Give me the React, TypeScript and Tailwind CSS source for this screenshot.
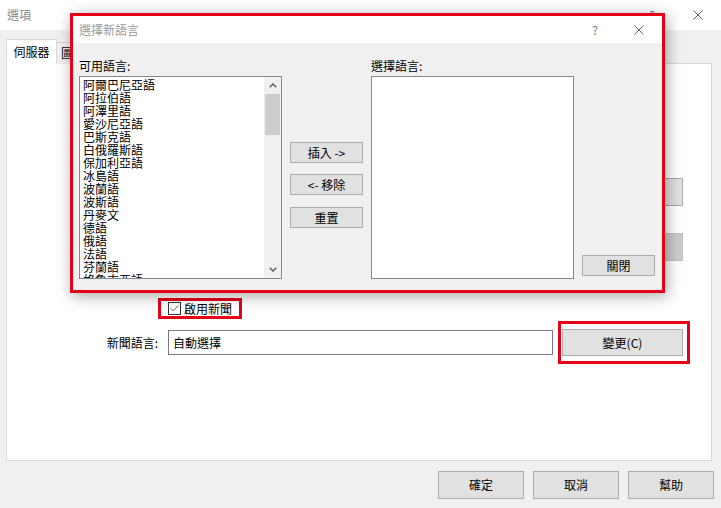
import { Check } from 'lucide-react'

const font = { fontFamily: '"Noto Sans CJK TC", "Noto Sans", sans-serif' }

const languages = [
  '阿爾巴尼亞語',
  '阿拉伯語',
  '阿澤里語',
  '愛沙尼亞語',
  '巴斯克語',
  '白俄羅斯語',
  '保加利亞語',
  '冰島語',
  '波蘭語',
  '波斯語',
  '丹麥文',
  '德語',
  '俄語',
  '法語',
  '芬蘭語',
  '格魯吉亞語',
]

function CloseGlyph({ className = '' }: { className?: string }) {
  return (
    <svg width="10" height="10" viewBox="0 0 10 10" className={className}>
      <path d="M0.5 0.5 L9.5 9.5 M9.5 0.5 L0.5 9.5" stroke="currentColor" strokeWidth="1" fill="none" />
    </svg>
  )
}

function SmallButton({ label }: { label: string }) {
  return (
    <button
      type="button"
      className="w-[73px] h-[21px] bg-[#e1e1e1] border border-[#adadad] text-[12px] leading-none text-black flex items-center justify-center"
    >
      {label}
    </button>
  )
}

function DialogButton({ label }: { label: string }) {
  return (
    <button
      type="button"
      className="w-[86px] h-[28px] bg-[#e1e1e1] border border-[#adadad] text-[12px] text-black flex items-center justify-center"
    >
      {label}
    </button>
  )
}

function LanguageDialog() {
  return (
    <div className="absolute left-[70px] top-[13px] w-[595px] h-[280px] border-[3px] border-[#e50019] bg-[#f0f0f0] shadow-[2px_3px_14px_rgba(0,0,0,0.35)] flex flex-col">
      <div className="h-[27px] bg-white flex items-center pl-[6px] pr-[18px] text-[12px] text-[#9a9a9a]">
        <span>選擇新語言</span>
        <span className="ml-auto mr-[36px] text-[#777]">?</span>
        <CloseGlyph className="text-[#666]" />
      </div>

      <div className="flex items-start pl-[6px] pt-[15px] text-[12px] text-black">
        <div className="flex flex-col">
          <div className="h-[16px] leading-[16px]">可用語言:</div>
          <div className="mt-[2px] w-[203px] h-[203px] border border-[#828790] bg-white flex overflow-hidden">
            <div className="flex-1 pl-[3px] pt-[1px] overflow-hidden">
              {languages.map((lang) => (
                <div key={lang} className="h-[13px] leading-[13px] whitespace-nowrap">
                  {lang}
                </div>
              ))}
            </div>
            <div className="w-[17px] bg-[#f0f0f0] flex flex-col items-center">
              <div className="h-[17px] flex items-center justify-center">
                <svg width="8" height="5" viewBox="0 0 8 5">
                  <path d="M0.8 4.2 L4 1 L7.2 4.2" stroke="#606060" strokeWidth="1.5" fill="none" />
                </svg>
              </div>
              <div className="w-[15px] h-[41px] bg-[#cdcdcd]" />
              <div className="mt-auto h-[17px] flex items-center justify-center">
                <svg width="8" height="5" viewBox="0 0 8 5">
                  <path d="M0.8 0.8 L4 4 L7.2 0.8" stroke="#606060" strokeWidth="1.5" fill="none" />
                </svg>
              </div>
            </div>
          </div>
        </div>

        <div className="ml-[8px] mt-[84px] flex flex-col gap-[11px]">
          <SmallButton label="插入 ->" />
          <SmallButton label="<- 移除" />
          <div className="mt-[1px]">
            <SmallButton label="重置" />
          </div>
        </div>

        <div className="ml-[8px] flex flex-col">
          <div className="h-[16px] leading-[16px]">選擇語言:</div>
          <div className="mt-[2px] w-[203px] h-[203px] border border-[#828790] bg-white" />
        </div>

        <div className="ml-[8px] mt-[197px]">
          <SmallButton label="關閉" />
        </div>
      </div>
    </div>
  )
}

export default function App() {
  return (
    <div className="relative w-[721px] h-[508px] bg-[#f0f0f0] overflow-hidden" style={font}>
      {/* main options window */}
      <div className="h-[30px] bg-white flex items-center pl-[7px] pr-[18px] text-[12px] text-[#8a8a8a]">
        <span>選項</span>
        <span className="ml-auto mr-[38px] text-[#777]">?</span>
        <CloseGlyph className="text-[#666]" />
      </div>

      <div className="px-[6px] pt-[9px]">
        <div className="flex items-end h-[25px] text-[12px] text-black">
          <div className="relative z-10 w-[51px] h-[25px] bg-white border border-b-0 border-[#d9d9d9] flex items-center justify-center">
            伺服器
          </div>
          <div className="w-[40px] h-[22px] bg-[#f0f0f0] border border-l-0 border-b-0 border-[#d9d9d9] pl-[4px] leading-[20px]">
            圖表
          </div>
        </div>

        <div className="-mt-px w-[706px] h-[398px] bg-white border border-[#d9d9d9] text-[12px] text-black">
          <div className="ml-[556px] mt-[114px] w-[120px] h-[28px] bg-[#e1e1e1] border border-[#adadad]" />
          <div className="ml-[556px] mt-[27px] w-[120px] h-[28px] bg-[#cccccc] border border-[#bfbfbf]" />

          <div className="ml-[151px] mt-[37px] inline-flex items-center h-[21px] border-[3px] border-[#e50019] pl-[7px] pr-[7px]">
            <div className="w-[13px] h-[13px] border border-[#333] bg-white flex items-center justify-center">
              <Check className="w-[11px] h-[11px] text-[#555]" strokeWidth={2} />
            </div>
            <span className="ml-[3px] leading-none">啟用新聞</span>
          </div>

          <div className="mt-[2px] flex items-center">
            <div className="w-[151px] text-right">新聞語言:</div>
            <div className="ml-[10px] w-[385px] h-[25px] border border-[#7a7a7a] flex items-center pl-[4px]">
              自動選擇
            </div>
            <div className="ml-[5px] border-[3px] border-[#e50019] pl-[1px] pr-[4px] py-[5px]">
              <button
                type="button"
                className="w-[121px] h-[27px] bg-[#e1e1e1] border border-[#adadad] flex items-center justify-center text-[12px]"
              >
                變更(C)
              </button>
            </div>
          </div>
        </div>
      </div>

      <div className="mt-[10px] pr-[7px] flex justify-end gap-[9px]">
        <DialogButton label="確定" />
        <DialogButton label="取消" />
        <DialogButton label="幫助" />
      </div>

      <LanguageDialog />
    </div>
  )
}
